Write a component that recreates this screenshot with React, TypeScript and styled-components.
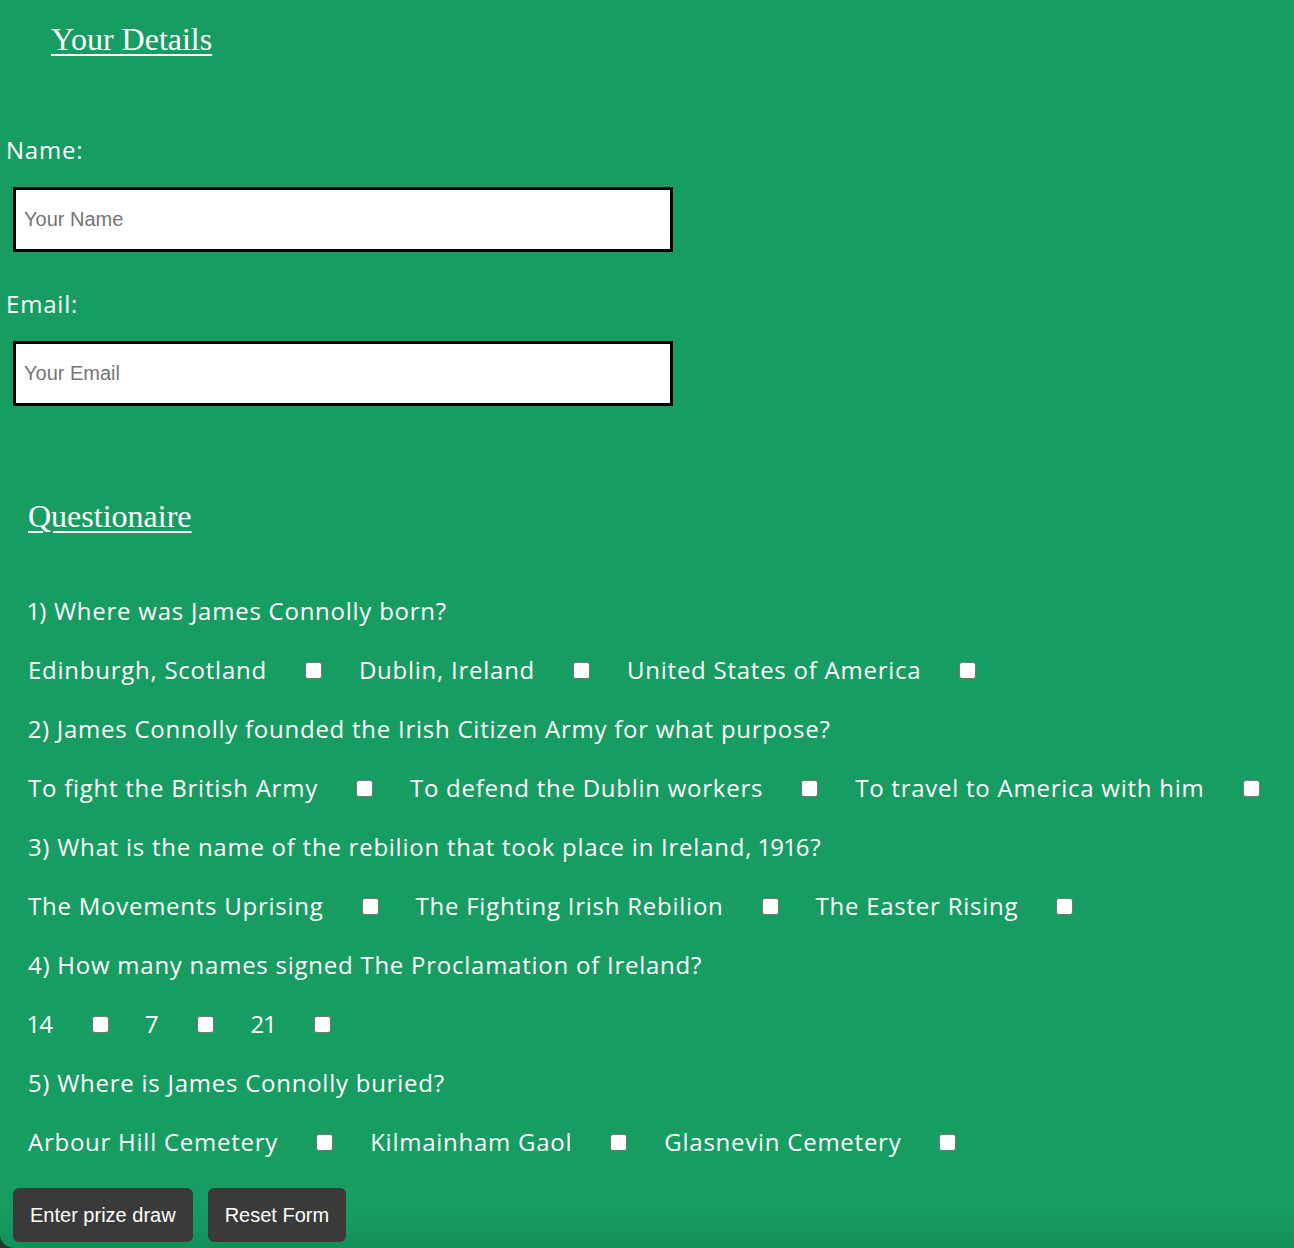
import React from 'react';
import styled, { createGlobalStyle } from 'styled-components';

interface IQuestion {
  text: string;
  options: string[];
}

const questions: IQuestion[] = [
  {
    text: '1) Where was James Connolly born?',
    options: ['Edinburgh, Scotland', 'Dublin, Ireland', 'United States of America'],
  },
  {
    text: '2) James Connolly founded the Irish Citizen Army for what purpose?',
    options: ['To fight the British Army', 'To defend the Dublin workers', 'To travel to America with him'],
  },
  {
    text: '3) What is the name of the rebilion that took place in Ireland, 1916?',
    options: ['The Movements Uprising', 'The Fighting Irish Rebilion', 'The Easter Rising'],
  },
  {
    text: '4) How many names signed The Proclamation of Ireland?',
    options: ['14', '7', '21'],
  },
  {
    text: '5) Where is James Connolly buried?',
    options: ['Arbour Hill Cemetery', 'Kilmainham Gaol', 'Glasnevin Cemetery'],
  },
];

const App: React.FunctionComponent = () => {
  return (
    <Page>
      <GlobalStyle />
      <Form onSubmit={(e) => e.preventDefault()}>
        <Heading indent={51}>Your Details</Heading>
        <FieldLabel htmlFor="name">Name:</FieldLabel>
        <TextInput id="name" type="text" placeholder="Your Name" />
        <FieldLabel htmlFor="email">Email:</FieldLabel>
        <TextInput id="email" type="email" placeholder="Your Email" />

        <Heading indent={28} spaced>
          Questionaire
        </Heading>
        <QuestionList>
          {questions.map((q, qi) => (
            <React.Fragment key={q.text}>
              <QuestionText>{q.text}</QuestionText>
              <OptionRow>
                {q.options.map((opt) => (
                  <Option key={opt}>
                    {opt}
                    <Check type="checkbox" name={`q${qi + 1}`} />
                  </Option>
                ))}
              </OptionRow>
            </React.Fragment>
          ))}
        </QuestionList>

        <ButtonRow>
          <Button type="submit">Enter prize draw</Button>
          <Button type="reset">Reset Form</Button>
        </ButtonRow>
      </Form>
    </Page>
  );
};

const GlobalStyle = createGlobalStyle`
  html, body {
    margin: 0;
    padding: 0;
    background: #1f3a2c;
  }
`;

const Page = styled.div`
  height: 1248px;
  background: linear-gradient(to bottom, #179d62 0, #179d62 1210px, #13905a 1248px);
  border-bottom-left-radius: 14px;
  font-family: 'Open Sans', 'Liberation Sans', sans-serif;
  font-variant-numeric: proportional-nums;
  color: #ffffff;
  overflow: hidden;
`;

const Form = styled.form`
  display: flex;
  flex-direction: column;
  align-items: flex-start;
  padding-top: 16px;
`;

const Heading = styled.h2<{ indent: number; spaced?: boolean }>`
  margin: ${(p) => (p.spaced ? '87px' : '0')} 0 0 ${(p) => p.indent}px;
  font-family: 'Liberation Serif', 'DejaVu Serif', serif;
  font-weight: 400;
  font-size: 32px;
  line-height: 46px;
  text-decoration: underline;
  text-underline-offset: 4px;
  text-decoration-thickness: 2px;
`;

const FieldLabel = styled.label`
  margin: 73px 0 0 6px;
  font-size: 24px;
  line-height: 30px;
  letter-spacing: 0.8px;

  & + input {
    margin-top: 22px;
  }

  input + & {
    margin-top: 37px;
  }
`;

const TextInput = styled.input`
  box-sizing: border-box;
  width: 660px;
  height: 65px;
  margin-left: 13px;
  padding: 0 8px;
  border: 3px solid #000;
  background: #fff;
  font-family: 'Liberation Sans', Arial, sans-serif;
  font-size: 20px;
  outline: none;

  &::placeholder {
    color: #757575;
  }
`;

const QuestionList = styled.div`
  display: flex;
  flex-direction: column;
  padding-left: 28px;
  margin-top: 57px;
`;

const QuestionText = styled.p`
  margin: 0;
  height: 59px;
  font-size: 24px;
  line-height: 30px;
  letter-spacing: 0.75px;
  white-space: nowrap;
`;

const OptionRow = styled.div`
  display: flex;
  align-items: flex-start;
  height: 59px;
`;

const Option = styled.label`
  display: flex;
  align-items: center;
  flex-shrink: 0;
  white-space: nowrap;
  font-size: 24px;
  line-height: 30px;
  letter-spacing: 0.75px;
`;

const Check = styled.input`
  appearance: none;
  box-sizing: border-box;
  width: 17px;
  height: 17px;
  margin: 0 37px 0 38px;
  border: 1px solid #767676;
  border-radius: 3px;
  background: #fff;
`;

const ButtonRow = styled.div`
  display: flex;
  gap: 15px;
  margin: 2px 0 0 13px;
`;

const Button = styled.button`
  height: 54px;
  padding: 0 17px;
  border: none;
  border-radius: 6px;
  background: #3a3a3a;
  color: #fff;
  font-family: 'Liberation Sans', Arial, sans-serif;
  font-size: 20px;
  cursor: pointer;
`;

export default App;
